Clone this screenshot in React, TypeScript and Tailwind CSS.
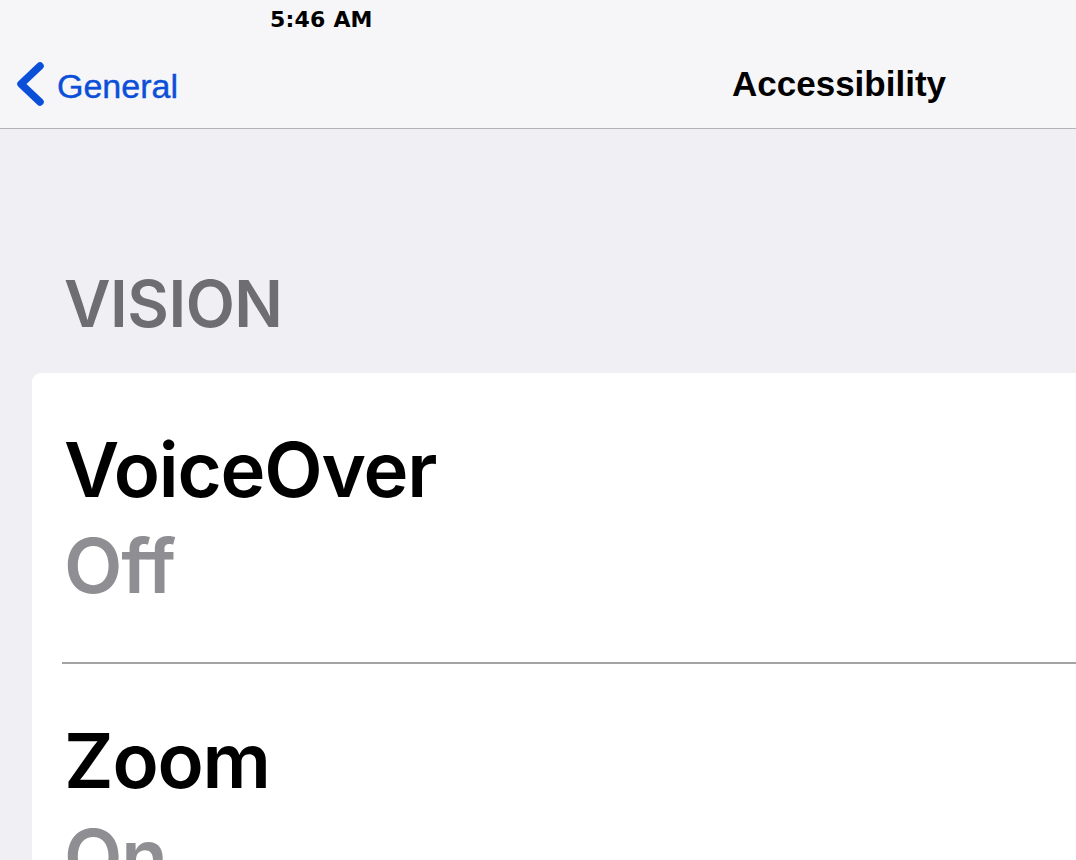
import React from "react";

const rows = [
  { title: "VoiceOver", value: "Off" },
  { title: "Zoom", value: "On" },
];

export default function App() {
  return (
    <div className="w-[1076px] h-[860px] overflow-hidden bg-[#efeff4]">
      <header className="bg-[#f6f6f8] border-b border-[#b4b4b8]">
        <div className="h-[40px] pl-[270px] pt-[8px]">
          <span
            className="block text-[22px] leading-[24px] font-bold tracking-[0.2px] text-black"
            style={{ fontFamily: '"DejaVu Sans", sans-serif' }}
          >
            5:46 AM
          </span>
        </div>
        <div
          className="h-[88px] flex items-start pt-[24px]"
          style={{ fontFamily: '"Liberation Sans", Arial, sans-serif' }}
        >
          <div className="w-[732px] flex items-center">
            <svg
              width="32"
              height="48"
              viewBox="0 0 32 48"
              className="ml-[14px] -mt-[4px]"
            >
              <path
                d="M26 6 L7 24 L26 42"
                fill="none"
                stroke="#0b4fd8"
                strokeWidth="7.5"
                strokeLinecap="round"
                strokeLinejoin="round"
              />
            </svg>
            <span className="ml-[11px] text-[34px] leading-[40px] text-[#0b4fd8] [-webkit-text-stroke:0.4px_#0b4fd8]">
              General
            </span>
          </div>
          <span className="text-[35px] leading-[40px] font-bold text-black">
            Accessibility
          </span>
        </div>
      </header>

      <main
        className="pt-[139px]"
        style={{ fontFamily: 'Inter, "Liberation Sans", sans-serif' }}
      >
        <div className="pl-[64px] text-[64px] leading-[72px] font-semibold text-[#6d6d72] tracking-[-0.5px]">
          VISION
        </div>
        <div className="mt-[33px] ml-[32px] bg-white rounded-tl-[9px]">
          {rows.map((r, i) => (
            <div key={r.title}>
              <div className="pl-[32px] pt-[48px] pb-[49px]">
                <div className="text-[76px] leading-[96px] font-semibold text-black tracking-[-1.2px]">
                  {r.title}
                </div>
                <div className="text-[76px] leading-[96px] font-semibold text-[#8e8e93] tracking-[-1.2px]">
                  {r.value}
                </div>
              </div>
              {i < rows.length - 1 && (
                <div className="ml-[30px] h-[2px] bg-[#a3a3a6]" />
              )}
            </div>
          ))}
        </div>
      </main>
    </div>
  );
}
